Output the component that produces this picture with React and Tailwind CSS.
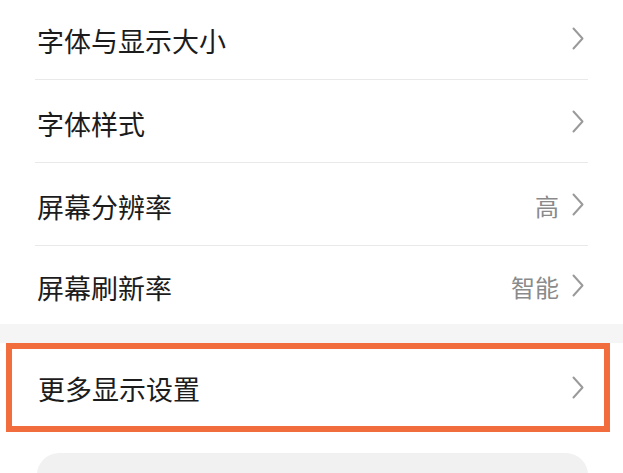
import React from "react";

function Chevron() {
  return (
    <svg width="12" height="23" viewBox="0 0 12 23" fill="none" className="shrink-0">
      <path d="M1.5 1.5 L10.5 11.5 L1.5 21.5" stroke="#9a9a9a" strokeWidth="2" strokeLinecap="round" strokeLinejoin="round" />
    </svg>
  );
}

function Row({ title, value, h }) {
  return (
    <div className={`flex items-center justify-between pl-[37px] pr-[39px] ${h}`}>
      <span className="text-[27px] leading-none text-[#1c1c1c] pt-[5px]">{title}</span>
      <div className="flex items-center gap-[13px]">
        {value && <span className="text-[24px] leading-none text-[#8a8a8a] pt-[4px]">{value}</span>}
        <Chevron />
      </div>
    </div>
  );
}

function Sep() {
  return <div className="mx-[35px] h-px bg-[#e9e9e9]" />;
}

export default function App() {
  return (
    <div
      className="w-[623px] h-[473px] overflow-hidden bg-white"
      style={{ fontFamily: '"Noto Sans CJK SC", "Noto Sans", sans-serif' }}
    >
      <div className="bg-white -mt-[3px]">
        <Row title="字体与显示大小" h="h-[82px]" />
        <Sep />
        <Row title="字体样式" h="h-[82px]" />
        <Sep />
        <Row title="屏幕分辨率" value="高" h="h-[82px]" />
        <Sep />
        <Row title="屏幕刷新率" value="智能" h="h-[78px]" />
      </div>
      <div className="h-[19px] bg-[#f5f5f5]" />
      <div className="bg-white">
        <div className="ml-[6px] w-[604px] h-[89px] border-[6px] border-[#f26d3d] flex items-center justify-between pl-[26px] pr-[20px]">
          <span className="text-[27px] leading-none text-[#1c1c1c] pt-[2px]">更多显示设置</span>
          <Chevron />
        </div>
      </div>
      <div className="pt-[21px] px-[37px] bg-white">
        <div className="h-[80px] rounded-[22px] bg-[#f1f1f1] mr-[-2px]" />
      </div>
    </div>
  );
}
